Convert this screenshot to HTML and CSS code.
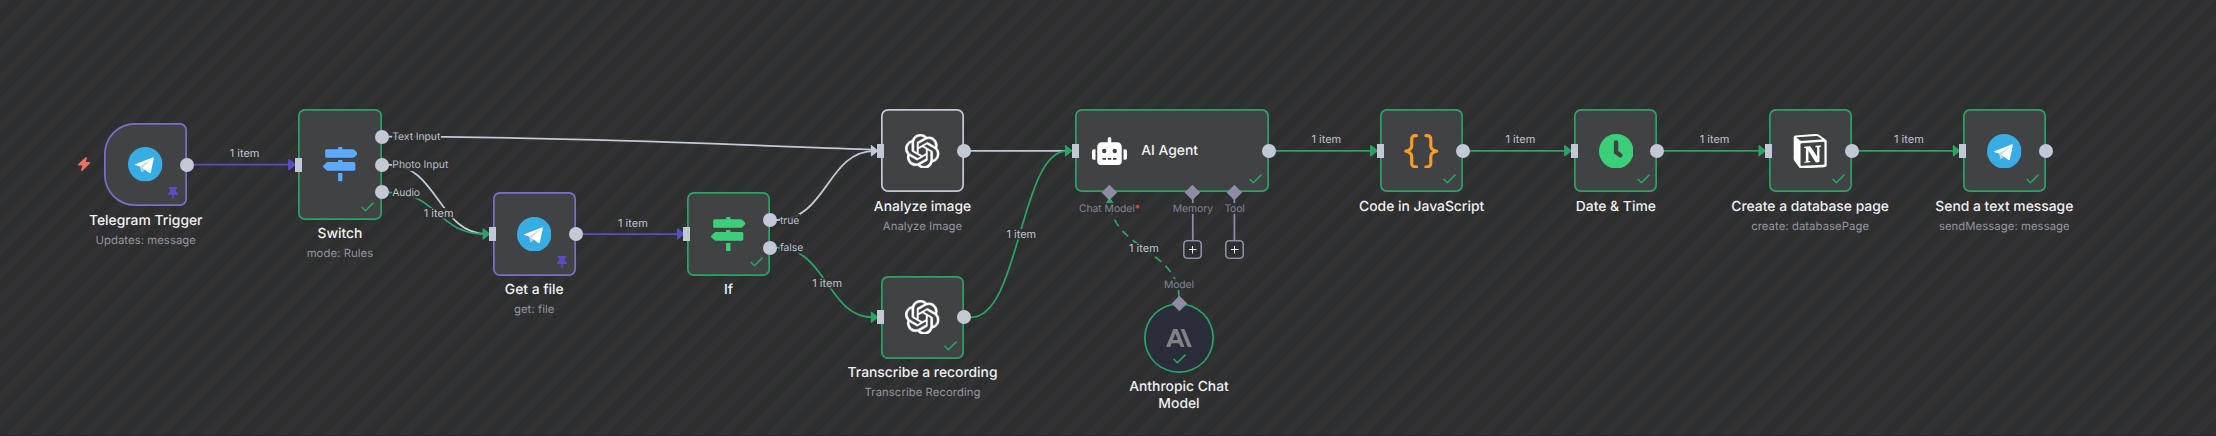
FILE: index.html
```html
<!DOCTYPE html>
<html lang="en">
<head>
<meta charset="utf-8">
<title>Workflow</title>
<link rel="stylesheet" href="styles.css">
</head>
<body>
<svg class="defs" width="0" height="0" aria-hidden="true">
  <defs>
    <symbol id="telegram" viewBox="0 0 240 240">
      <circle cx="120" cy="120" r="120" fill="#38ade3"/>
      <path d="m98 175c-3.9 0-3.2-1.5-4.6-5.2L82 132.2 170 80" fill="#c8daea"/>
      <path d="m98 175c3 0 4.3-1.4 6-3l16-15.6-20-12" fill="#a9c9dd"/>
      <path d="m100 144.4 48.4 35.7c5.5 3 9.5 1.5 10.9-5.1L179 82.2c2-8.1-3.1-11.7-8.4-9.3L55 117.5c-7.9 3.2-7.8 7.6-1.4 9.5l29.7 9.3L152 93c3.2-2 6.2-.9 3.8 1.3" fill="#fff"/>
    </symbol>
    <symbol id="signs" viewBox="0 0 512 512">
      <path fill="currentColor" d="M507.31 84.69L464 41.37c-6-6-14.14-9.37-22.63-9.37H288V16c0-8.84-7.16-16-16-16h-32c-8.84 0-16 7.16-16 16v16H56c-13.25 0-24 10.75-24 24v80c0 13.25 10.75 24 24 24h385.37c8.49 0 16.62-3.37 22.63-9.37l43.31-43.31c6.25-6.26 6.25-16.38 0-22.63zM224 496c0 8.84 7.16 16 16 16h32c8.84 0 16-7.16 16-16V384h-64v112zm232-272H288v-32h-64v32H70.63c-8.49 0-16.62 3.37-22.63 9.37L4.69 276.69c-6.25 6.25-6.25 16.38 0 22.63L48 342.63c6 6 14.14 9.37 22.63 9.37H456c13.25 0 24-10.75 24-24v-80c0-13.25-10.75-24-24-24z"/>
    </symbol>
    <symbol id="openai" viewBox="0 0 24 24">
      <path fill="#fff" stroke="#fff" stroke-width=".25" d="M22.2819 9.8211a5.9847 5.9847 0 0 0-.5157-4.9108 6.0462 6.0462 0 0 0-6.5098-2.9A6.0651 6.0651 0 0 0 4.9807 4.1818a5.9847 5.9847 0 0 0-3.9977 2.9 6.0462 6.0462 0 0 0 .7427 7.0966 5.98 5.98 0 0 0 .511 4.9107 6.051 6.051 0 0 0 6.5146 2.9001A5.9847 5.9847 0 0 0 13.2599 24a6.0557 6.0557 0 0 0 5.7718-4.2058 5.9894 5.9894 0 0 0 3.9977-2.9001 6.0557 6.0557 0 0 0-.7475-7.0729zm-9.022 12.6081a4.4755 4.4755 0 0 1-2.8764-1.0408l.1419-.0804 4.7783-2.7582a.7948.7948 0 0 0 .3927-.6813v-6.7369l2.02 1.1686a.071.071 0 0 1 .038.052v5.5826a4.504 4.504 0 0 1-4.4945 4.4944zm-9.6607-4.1254a4.4708 4.4708 0 0 1-.5346-3.0137l.142.0852 4.783 2.7582a.7712.7712 0 0 0 .7806 0l5.8428-3.3685v2.3324a.0804.0804 0 0 1-.0332.0615L9.74 19.9502a4.4992 4.4992 0 0 1-6.1408-1.6464zM2.3408 7.8956a4.485 4.485 0 0 1 2.3655-1.9728V11.6a.7664.7664 0 0 0 .3879.6765l5.8144 3.3543-2.0201 1.1685a.0757.0757 0 0 1-.071 0l-4.8303-2.7865A4.504 4.504 0 0 1 2.3408 7.872zm16.5963 3.8558L13.1038 8.364 15.1192 7.2a.0757.0757 0 0 1 .071 0l4.8303 2.7913a4.4944 4.4944 0 0 1-.6765 8.1042v-5.6772a.79.79 0 0 0-.407-.667zm2.0107-3.0231l-.142-.0852-4.7735-2.7818a.7759.7759 0 0 0-.7854 0L9.409 9.2297V6.8974a.0662.0662 0 0 1 .0284-.0615l4.8303-2.7866a4.4992 4.4992 0 0 1 6.6802 4.66zM8.3065 12.863l-2.02-1.1638a.0804.0804 0 0 1-.038-.0567V6.0742a4.4992 4.4992 0 0 1 7.3757-3.4537l-.142.0805L8.704 5.459a.7948.7948 0 0 0-.3927.6813zm1.0976-2.3654l2.602-1.4998 2.6069 1.4998v2.9994l-2.5974 1.4997-2.6067-1.4997Z"/>
    </symbol>
    <symbol id="robot" viewBox="0 0 640 512">
      <path fill="#fff" d="M32,224H64V416H32A31.96166,31.96166,0,0,1,0,384V256A31.96166,31.96166,0,0,1,32,224Zm512-48V448a64.06328,64.06328,0,0,1-64,64H160a64.06328,64.06328,0,0,1-64-64V176a79.974,79.974,0,0,1,80-80H288V32a32,32,0,0,1,64,0V96H464A79.974,79.974,0,0,1,544,176ZM264,256a40,40,0,1,0-40,40A39.997,39.997,0,0,0,264,256Zm-8,128H192v32h64Zm96,0H288v32h64ZM456,256a40,40,0,1,0-40,40A39.997,39.997,0,0,0,456,256Zm-8,128H384v32h64ZM640,256V384a31.96166,31.96166,0,0,1-32,32H576V224h32A31.96166,31.96166,0,0,1,640,256Z"/>
    </symbol>
    <symbol id="braces" viewBox="0 0 34 34">
      <g fill="none" stroke="#ff9b26" stroke-width="3.1" stroke-linecap="round" stroke-linejoin="round">
        <path d="M12.4 1.6H11a3.400 3.400 0 0 0-3.400 3.400v6.600c0 2.600-1.900 4.600-5.800 5.400 3.900.8 5.800 2.800 5.800 5.400v6.600a3.400 3.400 0 0 0 3.400 3.400h1.400"/>
        <path d="M21.600 1.600H23a3.400 3.400 0 0 1 3.400 3.400v6.600c0 2.600 1.900 4.600 5.800 5.400-3.900.8-5.800 2.800-5.800 5.400v6.600a3.400 3.400 0 0 1-3.400 3.400h-1.400"/>
      </g>
    </symbol>
    <symbol id="clock" viewBox="0 0 34 34">
      <circle cx="17" cy="17" r="17" fill="#3ccf7a"/>
      <path d="M16.800 8.300v9.600l4.200 3" fill="none" stroke="#414244" stroke-width="4.400" stroke-linecap="round"/>
    </symbol>
    <symbol id="notion" viewBox="0 0 96 100">
      <path fill="#fff" fill-rule="evenodd" d="M61.35 0.227l-55.333 4.087C1.553 4.7 0 7.617 0 11.113v60.66c0 2.723 0.967 5.053 3.3 8.167l13.007 16.913c2.137 2.723 4.08 3.307 8.16 3.113l64.257 -3.89c5.433 -0.387 6.99 -2.917 6.99 -7.193V20.64c0 -2.21 -0.873 -2.847 -3.443 -4.733L74.167 3.143c-4.273 -3.107 -6.02 -3.5 -12.817 -2.917zM25.92 19.523c-5.247 0.353 -6.437 0.433 -9.417 -1.99L8.927 11.507c-0.77 -0.78 -0.383 -1.753 1.557 -1.947l53.193 -3.887c4.467 -0.39 6.793 1.167 8.54 2.527l9.123 6.61c0.39 0.197 1.36 1.36 0.193 1.36l-54.933 3.307 -0.68 0.047zM19.803 88.3V30.367c0 -2.53 0.777 -3.697 3.103 -3.893L86 22.78c2.14 -0.193 3.107 1.167 3.107 3.693v57.547c0 2.53 -0.39 4.67 -3.883 4.863l-60.377 3.5c-3.493 0.193 -5.043 -0.97 -5.043 -4.083zm59.6 -54.827c0.387 1.75 0 3.5 -1.75 3.7l-2.91 0.577v42.773c-2.527 1.36 -4.853 2.137 -6.797 2.137 -3.107 0 -3.883 -0.973 -6.21 -3.887l-19.03 -29.94v28.967l6.02 1.363s0 3.5 -4.857 3.5l-13.39 0.777c-0.39 -0.78 0 -2.723 1.357 -3.11l3.497 -0.97v-38.3L30.48 40.667c-0.39 -1.75 0.58 -4.277 3.3 -4.473l14.367 -0.967 19.8 30.327v-26.83l-5.047 -0.58c-0.39 -2.143 1.163 -3.7 3.103 -3.89l13.4 -0.78z"/>
    </symbol>
    <symbol id="anthropic" viewBox="0 0 26 18">
      <path fill="#808087" fill-rule="evenodd" d="M7.300 0h4.200l7 18h-4l-1.400-3.700H5.600L4.200 18H0zM9.400 4.200 6.900 10.900h5zM14.600 0h3.900l7.300 18h-4z"/>
    </symbol>
    <symbol id="check" viewBox="0 0 13 10">
      <path d="M1 5.300 4.400 8.700 12 1.100" fill="none" stroke="#2aa367" stroke-width="1.600" stroke-linecap="round"/>
    </symbol>
    <symbol id="pin" viewBox="0 0 10 12">
      <path fill="#5b4cc4" d="M.9 0h8.200v1.900H7.700l.3 2.900c1.200.6 1.800 1.600 1.900 3.200H5.700v3.200L5 12l-.7-.8V8H.1c.1-1.600.7-2.600 1.900-3.200l.3-2.900H.9z"/>
    </symbol>
    <symbol id="bolt" viewBox="0 0 12 14">
      <path fill="#f1705f" d="M7.700.2C8.400-.1 9 .4 8.800 1L7.700 5h3.500c.8 0 1.100.9.5 1.400L4.500 13.700c-.7.6-1.500.1-1.300-.7l1.300-4.500H.9c-.9 0-1.200-.9-.6-1.500z"/>
    </symbol>
    <symbol id="arrow" viewBox="0 0 8 12">
      <path fill="currentColor" stroke="currentColor" stroke-width="1.400" stroke-linejoin="round" d="M.8 1 7 6 .8 11z"/>
    </symbol>
  </defs>
</svg>

<main class="canvas">
  <svg class="edges" width="2216" height="436" viewBox="0 0 2216 436">
    <g class="edge edge--pinned"><path d="M187 164.600H290M576 234H680"/></g>
    <g class="edge edge--idle">
      <path d="M381 136.700H388C560 136.700 740 145 874 149.600"/>
      <path d="M381 164.600H388C438 164.600 438 234 487 234"/>
      <path d="M770 220H777C827 220 827 150.800 875 150.800"/>
      <path d="M964 150.800H1069"/>
    </g>
    <g class="edge edge--done">
      <path d="M381 192.300H388C438 192.300 438 234 484 234"/>
      <path d="M770 247.700H777C827 247.700 827 317.300 873 317.300"/>
      <path d="M964 317.300H971C1020 317.300 1020 150.800 1067 150.800"/>
      <path d="M1269 150.800H1372M1463 150.800H1566M1657 150.800H1760M1852 150.800H1955"/>
      <path class="dashed" d="M1179 298C1179 249 1109.700 249 1109.700 199"/>
      <path class="head" d="M1106 203.500 1109.700 198 1113.400 203.500z"/>
    </g>
    <g class="edge edge--port"><path d="M1192.800 192V241M1234.400 192V241"/></g>
    <g class="c-pinned">
      <use href="#arrow" x="288" y="158.600" width="8" height="12"/>
      <use href="#arrow" x="676.700" y="228" width="8" height="12"/>
    </g>
    <g class="c-idle"><use href="#arrow" x="870.500" y="144.800" width="8" height="12"/></g>
    <g class="c-done">
      <use href="#arrow" x="482.300" y="228" width="8" height="12"/>
      <use href="#arrow" x="870.500" y="311.300" width="8" height="12"/>
      <use href="#arrow" x="1064.700" y="144.800" width="8" height="12"/>
      <use href="#arrow" x="1370" y="144.800" width="8" height="12"/>
      <use href="#arrow" x="1564" y="144.800" width="8" height="12"/>
      <use href="#arrow" x="1758.200" y="144.800" width="8" height="12"/>
      <use href="#arrow" x="1952.500" y="144.800" width="8" height="12"/>
    </g>
    <g class="mask">
      <rect x="392" y="131" width="49" height="12"/>
      <rect x="392" y="159" width="56.500" height="12"/>
      <rect x="392" y="186.500" width="28.500" height="12"/>
      <rect x="780" y="214" width="20" height="12"/>
      <rect x="780" y="241.500" width="24" height="12"/>
      <rect x="423.500" y="208" width="30.500" height="10.500"/>
      <rect x="812" y="278" width="30.500" height="10.500"/>
      <rect x="1006" y="229" width="30.500" height="10.500"/>
      <rect x="1128.500" y="243" width="31" height="10.500"/>
      <rect x="1079" y="203" width="62" height="11"/>
      <rect x="1172" y="203" width="42" height="11"/>
      <rect x="1224" y="203" width="21" height="11"/>
      <rect x="1164" y="279" width="30.500" height="11"/>
    </g>
    <g class="item">
      <text x="229.700" y="157.200" textLength="29.800">1 item</text>
      <text x="423.800" y="217.200" textLength="29.800">1 item</text>
      <text x="618" y="227.200" textLength="29.800">1 item</text>
      <text x="812.300" y="287.200" textLength="29.800">1 item</text>
      <text x="1006.400" y="238.200" textLength="29.800">1 item</text>
      <text x="1129" y="252.200" textLength="29.800">1 item</text>
      <text x="1311.400" y="143.200" textLength="29.800">1 item</text>
      <text x="1505.500" y="143.200" textLength="29.800">1 item</text>
      <text x="1699.700" y="143.200" textLength="29.800">1 item</text>
      <text x="1894" y="143.200" textLength="29.800">1 item</text>
    </g>
    <g class="port">
      <text x="392.300" y="140.200" textLength="48">Text Input</text>
      <text x="392.300" y="168.100" textLength="56">Photo Input</text>
      <text x="392.300" y="195.900" textLength="27.800">Audio</text>
      <text x="780" y="223.700" textLength="19.300">true</text>
      <text x="780" y="251.200" textLength="23.300">false</text>
    </g>
    <g class="port port--sub">
      <text x="1079" y="212" textLength="61">Chat Model<tspan class="required">*</tspan></text>
      <text x="1172.800" y="212" textLength="40.300">Memory</text>
      <text x="1224.400" y="212" textLength="20.300">Tool</text>
      <text x="1164" y="288" textLength="30">Model</text>
    </g>
  </svg>

  <svg class="bolt"><use href="#bolt"/></svg>

  <article class="node node--trigger pinned">
    <div class="box"><svg class="icon"><use href="#telegram"/></svg><svg class="pin"><use href="#pin"/></svg></div>
    <i class="out"></i>
    <div class="caption"><h2>Telegram Trigger</h2><p>Updates: message</p></div>
  </article>

  <article class="node node--switch done">
    <div class="box"><svg class="icon blue"><use href="#signs"/></svg><svg class="check"><use href="#check"/></svg></div>
    <i class="in"></i><i class="out out--a"></i><i class="out"></i><i class="out out--c"></i>
    <div class="caption"><h2>Switch</h2><p>mode: Rules</p></div>
  </article>

  <article class="node node--file pinned">
    <div class="box"><svg class="icon"><use href="#telegram"/></svg><svg class="pin"><use href="#pin"/></svg></div>
    <i class="in"></i><i class="out"></i>
    <div class="caption"><h2>Get a file</h2><p>get: file</p></div>
  </article>

  <article class="node node--if done">
    <div class="box"><svg class="icon green"><use href="#signs"/></svg><svg class="check"><use href="#check"/></svg></div>
    <i class="in"></i><i class="out out--true"></i><i class="out out--false"></i>
    <div class="caption"><h2>If</h2></div>
  </article>

  <article class="node node--analyze">
    <div class="box"><svg class="icon"><use href="#openai"/></svg></div>
    <i class="in"></i><i class="out"></i>
    <div class="caption"><h2>Analyze image</h2><p>Analyze Image</p></div>
  </article>

  <article class="node node--transcribe done">
    <div class="box"><svg class="icon"><use href="#openai"/></svg><svg class="check"><use href="#check"/></svg></div>
    <i class="in"></i><i class="out"></i>
    <div class="caption"><h2>Transcribe a recording</h2><p>Transcribe Recording</p></div>
  </article>

  <article class="node node--agent done">
    <div class="box"><svg class="icon icon--robot"><use href="#robot"/></svg><h2>AI Agent</h2><svg class="check"><use href="#check"/></svg></div>
    <i class="in"></i><i class="out"></i>
    <i class="gem gem--model"></i><i class="gem gem--memory"></i><i class="gem gem--tool"></i>
    <button class="add add--memory" aria-label="Add memory"></button>
    <button class="add add--tool" aria-label="Add tool"></button>
  </article>

  <article class="node node--anthropic done">
    <div class="box"><svg class="logo"><use href="#anthropic"/></svg><svg class="check"><use href="#check"/></svg></div>
    <i class="gem gem--top"></i>
    <div class="caption"><h2>Anthropic Chat<br>Model</h2></div>
  </article>

  <article class="node node--code done">
    <div class="box"><svg class="icon"><use href="#braces"/></svg><svg class="check"><use href="#check"/></svg></div>
    <i class="in"></i><i class="out"></i>
    <div class="caption"><h2>Code in JavaScript</h2></div>
  </article>

  <article class="node node--date done">
    <div class="box"><svg class="icon"><use href="#clock"/></svg><svg class="check"><use href="#check"/></svg></div>
    <i class="in"></i><i class="out"></i>
    <div class="caption"><h2>Date &amp; Time</h2></div>
  </article>

  <article class="node node--notion done">
    <div class="box"><svg class="icon"><use href="#notion"/></svg><svg class="check"><use href="#check"/></svg></div>
    <i class="in"></i><i class="out"></i>
    <div class="caption"><h2>Create a database page</h2><p>create: databasePage</p></div>
  </article>

  <article class="node node--send done">
    <div class="box"><svg class="icon"><use href="#telegram"/></svg><svg class="check"><use href="#check"/></svg></div>
    <i class="in"></i><i class="out"></i>
    <div class="caption"><h2>Send a text message</h2><p>sendMessage: message</p></div>
  </article>
</main>
</body>
</html>
```

FILE: styles.css
```css
:root {
  --done: #2aa367;
  --idle: #c3c8d5;
  --pinned: #5b4cc4;
  --sub: #8d8ca5;
}

* { box-sizing: border-box; }

body {
  margin: 0;
  font-family: Inter, "Liberation Sans", sans-serif;
  text-rendering: geometricPrecision;
  background: #2d2e2e;
}

.defs { position: absolute; }

.canvas {
  position: relative;
  width: 2216px;
  height: 436px;
  overflow: hidden;
  border-bottom: 1px solid #2c2529;
  background: repeating-linear-gradient(135deg,
    #323234 0, #323234 7.500px, #2d2e2e 8.200px, #2d2e2e 16.630px, #323234 17.330px);
}

/* Edges and their labels */
.edges { position: absolute; left: 0; top: 0; }
.edge { fill: none; stroke-width: 1.75; }
.edge--pinned { stroke: var(--pinned); }
.edge--idle { stroke: var(--idle); }
.edge--done { stroke: var(--done); }
.edge--port { stroke: var(--sub); }
.dashed { stroke-dasharray: 8 5.870; }
.head { fill: var(--done); stroke-width: 1; }
.c-pinned { color: var(--pinned); }
.c-idle { color: var(--idle); }
.c-done { color: var(--done); }
.mask { fill: #2e2f2f; fill-opacity: .88; }
.item { font-size: 11px; fill: #c0c3cf; }
.port { font-size: 10.400px; fill: #b9bcc8; }
.port--sub { fill: #84839a; }
.required { fill: #f0575a; }

.bolt { position: absolute; left: 77.500px; top: 156.800px; width: 12px; height: 14px; }

/* Nodes */
.node {
  position: absolute;
  width: 83.300px;
  height: 83.300px;
  --line: var(--idle);
}
.done { --line: var(--done); }
.pinned { --line: #7c6fc9; }

.box {
  position: relative;
  display: flex;
  align-items: center;
  justify-content: center;
  width: 100%;
  height: 100%;
  border-radius: 7px;
  background: #414244;
  box-shadow: inset 0 0 0 1.700px var(--line);
}
.icon { width: 34.500px; height: 34.500px; }
.icon--robot { width: 35px; height: 28px; }
.blue { color: #5aabff; }
.green { color: #3ccf7a; }
.check { position: absolute; right: 7.200px; bottom: 8.300px; width: 13px; height: 10px; }
.pin { position: absolute; right: 9px; bottom: 7.200px; width: 10px; height: 12px; }

.node--trigger { left: 104.100px; top: 123px; }
.node--trigger .box { border-radius: 31px 7px 7px 31px; }
.node--switch { left: 298.300px; top: 109.100px; height: 110.900px; }
.node--file { left: 492.600px; top: 192.300px; }
.node--if { left: 686.800px; top: 192.300px; }
.node--analyze { left: 880.900px; top: 109.200px; }
.node--transcribe { left: 880.900px; top: 275.600px; }
.node--agent { left: 1075.200px; top: 109.200px; width: 194px; }
.node--anthropic { left: 1144.300px; top: 303.300px; width: 69.400px; height: 69.400px; }
.node--code { left: 1380px; top: 109.200px; }
.node--date { left: 1574.200px; top: 109.200px; }
.node--notion { left: 1768.500px; top: 109.200px; }
.node--send { left: 1962.700px; top: 109.200px; }

.node--agent .box { justify-content: flex-start; gap: 14px; padding-left: 17px; }
.node--agent h2 { padding-top: 1px; }

.node--anthropic .box { border-radius: 50%; background: #2b2c3a; }
.logo { width: 26px; height: 18px; }
.node--anthropic .check { right: 28px; bottom: 8.500px; }

/* Connection handles */
.in, .out, .gem { position: absolute; background: var(--idle); }
.in { left: -3.500px; top: 50%; width: 7px; height: 14px; margin-top: -7px; }
.out { right: -7px; top: 50%; width: 14px; height: 14px; margin-top: -7px; border-radius: 50%; }
.out--a { top: 25%; }
.out--c { top: 75%; }
.out--true { top: 33.300%; }
.out--false { top: 66.700%; }
.gem { width: 10.800px; height: 10.800px; margin: -5.400px; top: 100%; background: var(--sub); transform: rotate(45deg); }
.gem--model { left: 34.500px; }
.gem--memory { left: 117.600px; }
.gem--tool { left: 159.200px; }
.gem--top { left: 50%; top: 0; }

.add {
  position: absolute;
  top: 130.900px;
  width: 19px;
  height: 19px;
  padding: 0;
  border: 0;
  border-radius: 4px;
  box-shadow: inset 0 0 0 1.600px var(--sub);
  background:
    linear-gradient(#e8e8ee, #e8e8ee) center / 7.500px 1.200px no-repeat,
    linear-gradient(#e8e8ee, #e8e8ee) center / 1.200px 7.500px no-repeat,
    #2d2e2e;
}
.add--memory { left: 108.100px; }
.add--tool { left: 149.700px; }

/* Captions */
.caption {
  position: absolute;
  top: 100%;
  left: 50%;
  display: flex;
  flex-direction: column;
  align-items: center;
  gap: 2.900px;
  padding-top: 6.300px;
  transform: translateX(-50%);
  text-align: center;
  white-space: nowrap;
}
h2 { margin: 0; font-size: 13.870px; font-weight: 500; line-height: 17.300px; color: #f0f0f3; }
p { margin: 0; font-size: 11.300px; line-height: 15px; letter-spacing: .07px; color: #94959e; }
```
